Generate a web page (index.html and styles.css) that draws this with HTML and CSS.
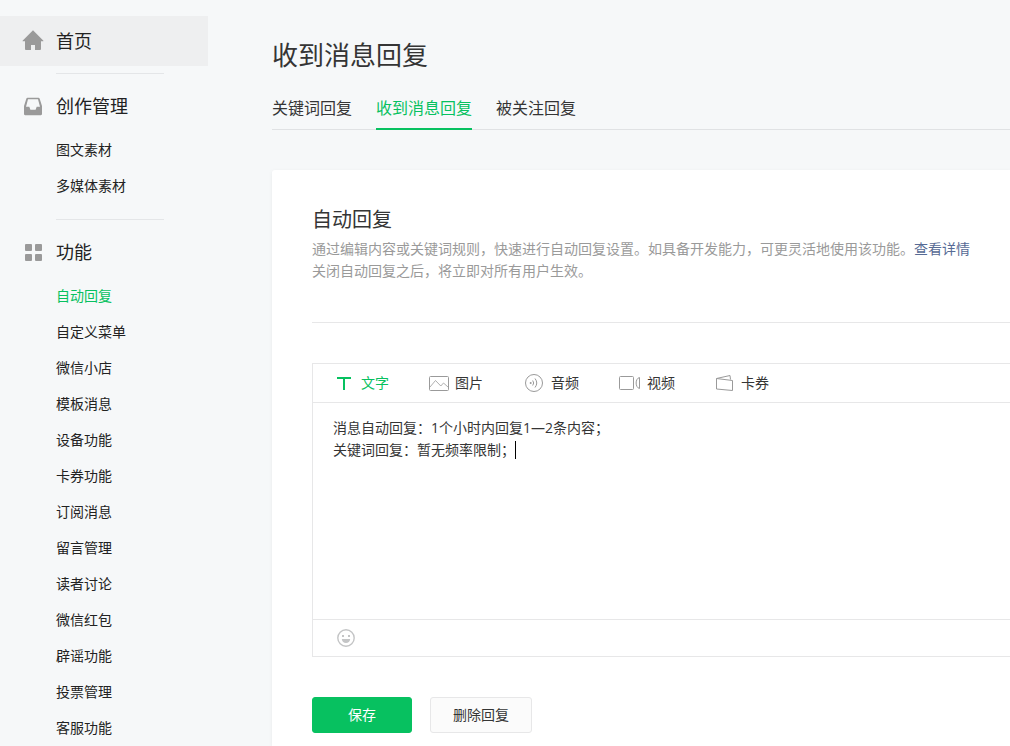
FILE: index.html
```html
<!DOCTYPE html>
<html lang="zh-CN">
<head>
<meta charset="utf-8">
<title>收到消息回复</title>
<link rel="stylesheet" href="styles.css">
</head>
<body>
<div class="layout">
  <nav class="sidebar">
    <a class="menu-title menu-title-current" href="#">
      <svg class="menu-icon" viewBox="0 0 22 22" width="22" height="22"><path d="M11 .2 21.2 10.400c.4.5.2.9-.4.9H19v7.400c0 .8-.4 1.300-1.200 1.300H13v-5H9v5H4.200c-.8 0-1.200-.5-1.200-1.300v-7.400H1.200c-.6 0-.8-.4-.4-.9z"/></svg>
      <span>首页</span>
    </a>
    <section class="menu-group">
      <h2 class="menu-title">
        <svg class="menu-icon" viewBox="0 0 22 22" width="22" height="22"><path fill-rule="evenodd" d="M5.500 2.800h11c.6 0 1 .3 1.200.9L20 11v8c0 .7-.5 1.200-1.200 1.200H3.200c-.7 0-1.200-.5-1.200-1.200V11l2.300-7.300c.2-.6.600-.9 1.200-.9zM6 4.300 4 11.800h3.300l1.100 3h5.200l1.100-3H18l-2-7.500z"/></svg>
        <span>创作管理</span>
      </h2>
      <ul class="menu-list">
        <li><a href="#">图文素材</a></li>
        <li><a href="#">多媒体素材</a></li>
      </ul>
    </section>
    <section class="menu-group">
      <h2 class="menu-title">
        <svg class="menu-icon" viewBox="0 0 22 22" width="22" height="22"><rect x="3" y="3" width="7" height="7" rx="1"/><rect x="13" y="3" width="7" height="7" rx="1"/><rect x="3" y="13" width="7" height="7" rx="1"/><rect x="13" y="13" width="7" height="7" rx="1"/></svg>
        <span>功能</span>
      </h2>
      <ul class="menu-list">
        <li><a class="active" href="#">自动回复</a></li>
        <li><a href="#">自定义菜单</a></li>
        <li><a href="#">微信小店</a></li>
        <li><a href="#">模板消息</a></li>
        <li><a href="#">设备功能</a></li>
        <li><a href="#">卡券功能</a></li>
        <li><a href="#">订阅消息</a></li>
        <li><a href="#">留言管理</a></li>
        <li><a href="#">读者讨论</a></li>
        <li><a href="#">微信红包</a></li>
        <li><a href="#">辟谣功能</a></li>
        <li><a href="#">投票管理</a></li>
        <li><a href="#">客服功能</a></li>
      </ul>
    </section>
  </nav>

  <main class="main">
    <h1 class="page-title">收到消息回复</h1>
    <nav class="tabs">
      <a class="tab" href="#">关键词回复</a>
      <a class="tab tab-current" href="#">收到消息回复</a>
      <a class="tab" href="#">被关注回复</a>
    </nav>

    <div class="panel">
      <header class="intro">
        <h2 class="intro-title">自动回复</h2>
        <p class="intro-text">通过编辑内容或关键词规则，快速进行自动回复设置。如具备开发能力，可更灵活地使用该功能。<a href="#">查看详情</a><br>关闭自动回复之后，将立即对所有用户生效。</p>
      </header>

      <form class="reply-form">
        <div class="editor">
          <div class="toolbar">
            <button type="button" class="tool tool-current">
              <svg width="18" height="20" viewBox="0 0 18 20"><path fill="currentColor" d="M0 4h14v2H8v11H6V6H0z"/></svg>文字
            </button>
            <button type="button" class="tool">
              <svg class="line-icon" width="20" height="20" viewBox="0 0 20 20"><rect x=".5" y="3.500" width="19" height="14" rx="1"/><path stroke-width=".8" d="M1 14 6.500 7.500l5.300 5.500 2.700-3 4.500 4"/></svg>图片
            </button>
            <button type="button" class="tool">
              <svg class="line-icon" width="22" height="20" viewBox="0 0 22 20"><circle cx="11" cy="10" r="8.500"/><path d="M9.700 7.500q2 2.500 0 5M12 5.500q3.500 4.500 0 9"/><circle class="dot" cx="7.700" cy="10" r="1"/></svg>音频
            </button>
            <button type="button" class="tool">
              <svg class="line-icon" width="22" height="20" viewBox="0 0 22 20"><rect x=".5" y="3.500" width="14" height="13" rx="1"/><path d="M20.500 4.500v11c-4.500-1-4.500-10 0-11z"/></svg>视频
            </button>
            <button type="button" class="tool">
              <svg class="line-icon" width="20" height="20" viewBox="0 0 20 20"><path d="M1.500 5.500 17.500 7.500v10L1.500 16zM1.500 5.500l13.500-3 .5 4"/></svg>卡券
            </button>
          </div>
          <div class="editor-body">
            <textarea class="editor-input" aria-label="回复内容" spellcheck="false">消息自动回复：1个小时内回复1—2条内容；
关键词回复：暂无频率限制；</textarea>
            <span class="caret"></span>
          </div>
          <div class="editor-foot">
            <button type="button" class="emoji" aria-label="表情">
              <svg width="18" height="18" viewBox="0 0 18 18"><circle cx="9" cy="9" r="8.200" fill="none" stroke="#c4c5c6" stroke-width="1.400"/><path fill="#c4c5c6" d="M5 6h2v2H5zM11 6h2v2h-2zM4.800 10h8.400c-.2 2.500-2 4-4.200 4s-4-1.500-4.200-4z"/></svg>
            </button>
          </div>
        </div>
        <div class="actions">
          <button type="submit" class="btn btn-primary">保存</button>
          <button type="button" class="btn">删除回复</button>
        </div>
      </form>
    </div>
  </main>
</div>
</body>
</html>
```
FILE: styles.css
```css
* {
  box-sizing: border-box;
}

body {
  margin: 0;
  background: #f6f8f9;
  color: #353535;
  font: 14px/22px "Open Sans", "Noto Sans CJK SC", sans-serif;
  overflow: hidden;
}

h1, h2, p, ul {
  margin: 0;
  padding: 0;
  font-weight: 400;
}

a {
  color: inherit;
  text-decoration: none;
}

button {
  padding: 0;
  border: 0;
  background: none;
  color: inherit;
  font: inherit;
}

.layout {
  display: flex;
  height: 100vh;
}

.sidebar {
  flex: 0 0 208px;
  padding-top: 16px;
  color: #222;
}

.menu-title {
  display: flex;
  align-items: center;
  gap: 12px;
  height: 50px;
  padding-left: 22px;
  font-size: 18px;
}

.menu-title-current {
  background: #eeeff0;
}

.menu-icon {
  fill: #9a9a9a;
}

.menu-group::before {
  content: "";
  display: block;
  width: 108px;
  margin: 7px 0 7px 56px;
  border-top: 1px solid #e4e6e8;
}

.menu-list {
  padding: 1px 0 8px 56px;
  list-style: none;
  line-height: 36px;
}

.menu-list .active {
  color: #07c160;
}

.main {
  flex: 1;
  min-width: 0;
  display: flex;
  flex-direction: column;
  padding: 36px 0 0 64px;
}

.page-title {
  font-size: 26px;
  line-height: 38px;
}

.tabs {
  display: flex;
  gap: 24px;
  margin: 18px 0 40px;
  border-bottom: 1px solid #e0e2e4;
  font-size: 16px;
  line-height: 32px;
}

.tab {
  height: 38px;
  margin-bottom: -1px;
  border-bottom: 2px solid transparent;
}

.tab-current {
  border-color: #07c160;
  color: #07c160;
}

.panel {
  flex: 1;
  padding: 34px 0 0 40px;
  border-top-left-radius: 3px;
  background: #fff;
  box-shadow: 0 1px 4px rgba(0, 0, 0, 0.06);
}

.intro {
  padding-bottom: 40px;
  border-bottom: 1px solid #e7e7e8;
}

.intro-title {
  font-size: 20px;
  line-height: 32px;
}

.intro-text {
  margin-top: 2px;
  color: #9a9a9a;
  white-space: nowrap;
}

.intro-text a {
  color: #576b95;
}

.editor {
  margin-top: 40px;
  border: 1px solid #e7e7e8;
  border-right: 0;
}

.toolbar {
  display: flex;
  gap: 40px;
  height: 39px;
  padding-left: 24px;
  border-bottom: 1px solid #e7e7e8;
}

.tool {
  display: flex;
  align-items: center;
  gap: 6px;
}

.tool-current {
  color: #07c160;
}

.line-icon {
  fill: none;
  stroke: #9a9a9a;
}

.dot {
  fill: #9a9a9a;
  stroke: none;
}

.editor-body {
  position: relative;
}

.editor-input {
  display: block;
  width: 100%;
  height: 216px;
  padding: 14px 20px;
  border: 0;
  outline: 0;
  resize: none;
  background: transparent;
  color: inherit;
  font: inherit;
}

.caret {
  position: absolute;
  top: 38px;
  left: 202px;
  width: 1px;
  height: 18px;
  background: #000;
}

.editor-foot {
  display: flex;
  align-items: center;
  height: 37px;
  padding-left: 24px;
  border-top: 1px solid #e7e7e8;
}

.emoji {
  display: flex;
}

.actions {
  display: flex;
  gap: 18px;
  margin-top: 40px;
}

.btn {
  height: 36px;
  padding: 0 22px;
  border: 1px solid #e7e7e8;
  border-radius: 3px;
  background: #fbfbfb;
}

.btn-primary {
  padding: 0 35px;
  border-color: #07c160;
  background: #07c160;
  color: #fff;
}
```
